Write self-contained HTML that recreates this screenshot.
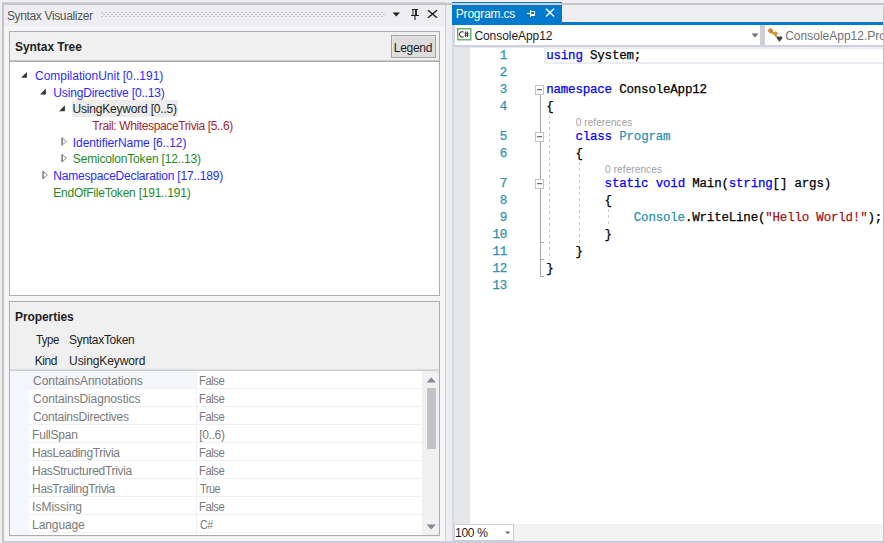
<!DOCTYPE html><html><head><meta charset="utf-8"><style>
*{margin:0;padding:0;box-sizing:border-box}
html,body{width:884px;height:543px;overflow:hidden;background:#eeeef2}
body{position:relative;font-family:"Liberation Sans",sans-serif}
div,svg{position:absolute}
svg{shape-rendering:crispEdges}
svg.aa{shape-rendering:auto}
.t{white-space:pre;line-height:1}
.m{font-family:"Liberation Mono",monospace;font-size:12.5px;letter-spacing:-0.2px;white-space:pre;line-height:12.5px;-webkit-text-stroke:0.25px currentColor}
.kw{color:#0000ff}.ty{color:#2b91af}.st{color:#a31515}
</style></head><body><div style="left:2px;top:2px;width:444px;height:1px;background:#d0d2de"></div>
<div style="left:2px;top:3px;width:882px;height:2px;background:#c4c4c4"></div>
<div style="left:2px;top:2px;width:2px;height:541px;background:#c4c4c4"></div>
<div style="left:883px;top:3px;width:1px;height:540px;background:#c4c4c4"></div>
<div style="left:4px;top:5px;width:441px;height:21px;background:#eeeef2"></div>
<div style="left:4px;top:26px;width:441px;height:515px;background:#f5f5f5"></div>
<div style="left:445px;top:5px;width:1px;height:536px;background:#cccedb"></div>
<div style="left:4px;top:541px;width:879px;height:2px;background:#cccedb"></div>
<svg style="left:101px;top:12px" width="284" height="5"><defs><pattern id="g" width="4" height="4" patternUnits="userSpaceOnUse"><rect x="0" y="0" width="2" height="1" fill="#c3c3ca"/><rect x="2" y="2" width="2" height="1" fill="#c3c3ca"/></pattern></defs><rect width="284" height="5" fill="url(#g)"/></svg>
<svg class="aa" style="left:392px;top:12px" width="9" height="6"><path d="M0.6 0.4H7.9L4.25 4.6Z" fill="#1e1e1e"/></svg>
<svg style="left:411px;top:9px" width="8" height="11"><rect x="1" y="0" width="6" height="1" fill="#2a2a2a"/><rect x="1" y="1" width="2" height="5" fill="#8a8a8a"/><rect x="4" y="1" width="2" height="5" fill="#2a2a2a"/><rect x="0" y="6" width="8" height="1" fill="#1e1e1e"/><rect x="3" y="7" width="2" height="4" fill="#7a7a7a"/></svg>
<svg class="aa" style="left:427px;top:9px" width="11" height="10"><path d="M1 1.2L10 8.8M10 1.2L1 8.8" stroke="#1e1e1e" stroke-width="1.5"/></svg>
<div style="left:9px;top:31px;width:431px;height:265px;border:1px solid #abadb3;background:#fff"></div>
<div style="left:10px;top:32px;width:429px;height:28px;background:#f0f0f0"></div>
<div style="left:10px;top:60px;width:429px;height:1px;background:#c6c8cc"></div>
<div style="left:10px;top:61px;width:429px;height:1px;background:#abadb3"></div>
<div style="left:391px;top:35px;width:45px;height:23px;border:1px solid #a3a3a3;background:#dddddd;box-shadow:inset 1px 1px 0 #e6e6e6"></div>
<div style="left:72px;top:100px;width:106px;height:17px;background:#ececec"></div>
<svg class="aa" style="left:21px;top:71px" width="9" height="9"><path d="M5.90 0.90V6.80H0.10Z" fill="#333"/></svg>
<svg class="aa" style="left:40px;top:88px" width="9" height="9"><path d="M5.90 0.61V6.51H0.10Z" fill="#333"/></svg>
<svg class="aa" style="left:59px;top:105px" width="9" height="9"><path d="M5.90 0.32V6.22H0.10Z" fill="#333"/></svg>
<svg class="aa" style="left:61px;top:137px" width="9" height="10"><path d="M1.30 1.10L5.40 4.50L1.30 7.90Z" fill="none" stroke="#8a8a8a" stroke-width="1"/><rect x="0.30" y="0.50" width="1.7" height="8" fill="#8a8a8a"/></svg>
<svg class="aa" style="left:61px;top:154px" width="9" height="10"><path d="M1.30 0.81L5.40 4.21L1.30 7.61Z" fill="none" stroke="#8a8a8a" stroke-width="1"/><rect x="0.30" y="0.21" width="1.7" height="8" fill="#8a8a8a"/></svg>
<svg class="aa" style="left:42px;top:170px" width="9" height="10"><path d="M1.30 1.52L5.40 4.92L1.30 8.32Z" fill="none" stroke="#8a8a8a" stroke-width="1"/><rect x="0.30" y="0.92" width="1.7" height="8" fill="#8a8a8a"/></svg>
<div style="left:9px;top:301px;width:431px;height:235px;border:1px solid #abadb3;background:#fff"></div>
<div style="left:10px;top:302px;width:429px;height:68px;background:#f0f0f0"></div>
<div style="left:10px;top:369px;width:429px;height:1px;background:#dcdde0"></div>
<div style="left:10px;top:370px;width:429px;height:1px;background:#cdced2"></div>
<div style="left:10px;top:371px;width:19px;height:164px;background:#f4f6fb"></div>
<div style="left:10px;top:371px;width:186px;height:18px;background:#f4f6fb"></div>
<div style="left:29px;top:388px;width:393px;height:1px;background:#f1f1f3"></div>
<div style="left:29px;top:406px;width:393px;height:1px;background:#f1f1f3"></div>
<div style="left:29px;top:424px;width:393px;height:1px;background:#f1f1f3"></div>
<div style="left:29px;top:442px;width:393px;height:1px;background:#f1f1f3"></div>
<div style="left:29px;top:460px;width:393px;height:1px;background:#f1f1f3"></div>
<div style="left:29px;top:478px;width:393px;height:1px;background:#f1f1f3"></div>
<div style="left:29px;top:496px;width:393px;height:1px;background:#f1f1f3"></div>
<div style="left:29px;top:514px;width:393px;height:1px;background:#f1f1f3"></div>
<div style="left:29px;top:532px;width:393px;height:1px;background:#f1f1f3"></div>
<div style="left:196px;top:371px;width:1px;height:164px;background:#f1f1f3"></div>
<div style="left:422px;top:371px;width:17px;height:164px;background:#f0f0f0"></div>
<div style="left:427px;top:388px;width:9px;height:61px;background:#c2c3c9"></div>
<svg class="aa" style="left:426px;top:377px" width="11" height="6"><path d="M0.5 5.5L5.25 0.5L10 5.5Z" fill="#868999"/></svg>
<svg class="aa" style="left:426px;top:524px" width="11" height="6"><path d="M0.5 0.5L5.25 5.5L10 0.5Z" fill="#868999"/></svg>
<div style="left:452px;top:2px;width:110px;height:1px;background:#007acc"></div>
<div style="left:452px;top:3px;width:110px;height:2px;background:#d6ccc6"></div>
<div style="left:452px;top:5px;width:110px;height:17px;background:#007acc"></div>
<div style="left:452px;top:22px;width:431px;height:3px;background:#007acc"></div>
<svg style="left:527px;top:10px" width="9" height="8"><rect x="0" y="3" width="3" height="1" fill="#fff"/><rect x="3" y="0" width="1" height="7" fill="#fff"/><rect x="4" y="1" width="4" height="1" fill="#fff"/><rect x="4" y="4" width="4" height="2" fill="#fff"/><rect x="7" y="2" width="1" height="2" fill="#fff"/></svg>
<svg class="aa" style="left:545px;top:8px" width="10" height="10"><path d="M1 0.8L9 8.6M9 0.8L1 8.6" stroke="#fff" stroke-width="1.4"/></svg>
<div style="left:452px;top:25px;width:2px;height:516px;background:#d6d8e3"></div>
<div style="left:454px;top:25px;width:1px;height:22px;background:#d6d8e3"></div>
<div style="left:455px;top:25px;width:305px;height:20px;background:#fff"></div>
<div style="left:760px;top:25px;width:5px;height:20px;background:#cccedb"></div>
<div style="left:765px;top:25px;width:118px;height:20px;background:#fff"></div>
<div style="left:455px;top:45px;width:428px;height:2px;background:#cfd1dd"></div>
<div style="left:470px;top:47px;width:413px;height:1px;background:#e6e7ee"></div>
<div style="left:454px;top:47px;width:16px;height:1px;background:#e0e1e6"></div>
<svg class="aa" style="left:457px;top:28px" width="15" height="13"><rect x="0.75" y="0.75" width="13" height="11" fill="#fff" stroke="#6cb56c" stroke-width="1.5"/><path d="M6.6 4.2A2.6 2.6 0 1 0 6.6 8.4" fill="none" stroke="#555" stroke-width="1.2"/><path d="M8.5 3.5V9M10.5 3.5V9M7.6 5.2H11.6M7.6 7.3H11.6" stroke="#444" stroke-width="1.1"/></svg>
<svg class="aa" style="left:751px;top:33px" width="8" height="5"><path d="M0.5 0.5H7.5L4 4.5Z" fill="#717171"/></svg>
<svg class="aa" style="left:764px;top:25px" width="22" height="20"><path d="M4.5 5.5L6.5 3.8L8.5 5.8L6.5 7.6Z" fill="#d08a24" stroke="#d08a24" stroke-width="1.6" stroke-linejoin="round"/><path d="M7.5 6.8L9.8 8.8L11.6 7.2L13 8.6L11.2 10.2L12.8 11.8" fill="none" stroke="#d08a24" stroke-width="1.8" stroke-linejoin="round"/><path d="M15.5 16.8L12.8 13.6A1.45 1.45 0 0 1 15.5 12.2A1.45 1.45 0 0 1 18.2 13.6Z" fill="#404040"/></svg>
<div style="left:454px;top:48px;width:16px;height:476px;background:#e6e7e8"></div>
<div style="left:470px;top:48px;width:413px;height:476px;background:#fff"></div>
<div style="left:455px;top:524px;width:428px;height:17px;background:#f3f3f3"></div>
<div style="left:454px;top:524px;width:60px;height:17px;border:1px solid #cccedb;background:#fff"></div>
<svg class="aa" style="left:505px;top:531px" width="6" height="4"><path d="M0 0.5H5.5L2.75 3.2Z" fill="#717171"/></svg>
<div style="left:544px;top:47px;width:339px;height:17px;border:2px solid #ebebf2;border-right:none"></div>
<div class="m" style="left:546.2px;top:50px;color:#000"><span class="kw">using</span> System;</div>
<div class="m" style="left:499.7px;top:50px;color:#2b91af">1</div>
<div class="m" style="left:499.7px;top:67px;color:#2b91af">2</div>
<div class="m" style="left:546.2px;top:84px;color:#000"><span class="kw">namespace</span> ConsoleApp12</div>
<div class="m" style="left:499.7px;top:84px;color:#2b91af">3</div>
<div class="m" style="left:546.2px;top:101px;color:#000">{</div>
<div class="m" style="left:499.7px;top:101px;color:#2b91af">4</div>
<div class="m" style="left:546.2px;top:131px;color:#000">    <span class="kw">class</span> <span class="ty">Program</span></div>
<div class="m" style="left:499.7px;top:131px;color:#2b91af">5</div>
<div class="m" style="left:546.2px;top:148px;color:#000">    {</div>
<div class="m" style="left:499.7px;top:148px;color:#2b91af">6</div>
<div class="m" style="left:546.2px;top:178px;color:#000">        <span class="kw">static</span> <span class="kw">void</span> Main(<span class="kw">string</span>[] args)</div>
<div class="m" style="left:499.7px;top:178px;color:#2b91af">7</div>
<div class="m" style="left:546.2px;top:195px;color:#000">        {</div>
<div class="m" style="left:499.7px;top:195px;color:#2b91af">8</div>
<div class="m" style="left:546.2px;top:212px;color:#000">            <span class="ty">Console</span>.WriteLine(<span class="st">"Hello World!"</span>);</div>
<div class="m" style="left:499.7px;top:212px;color:#2b91af">9</div>
<div class="m" style="left:546.2px;top:229px;color:#000">        }</div>
<div class="m" style="left:492.4px;top:229px;color:#2b91af">10</div>
<div class="m" style="left:546.2px;top:246px;color:#000">    }</div>
<div class="m" style="left:492.4px;top:246px;color:#2b91af">11</div>
<div class="m" style="left:546.2px;top:263px;color:#000">}</div>
<div class="m" style="left:492.4px;top:263px;color:#2b91af">12</div>
<div class="m" style="left:492.4px;top:280px;color:#2b91af">13</div>
<div style="left:540px;top:94px;width:1px;height:183px;background:#a5a5a5"></div>
<div style="left:540px;top:242px;width:4px;height:1px;background:#a5a5a5"></div>
<div style="left:540px;top:259px;width:4px;height:1px;background:#a5a5a5"></div>
<div style="left:540px;top:276px;width:4px;height:1px;background:#a5a5a5"></div>
<svg style="left:535px;top:85px" width="10" height="10"><rect x="0.5" y="0.5" width="8" height="9" fill="#fff" stroke="#c4c4c4"/><rect x="2" y="4" width="5" height="1" fill="#707070"/><rect x="2" y="5" width="5" height="1" fill="#d8d8d8"/></svg>
<svg style="left:535px;top:132px" width="10" height="10"><rect x="0.5" y="0.5" width="8" height="9" fill="#fff" stroke="#c4c4c4"/><rect x="2" y="4" width="5" height="1" fill="#707070"/><rect x="2" y="5" width="5" height="1" fill="#d8d8d8"/></svg>
<svg style="left:535px;top:179px" width="10" height="10"><rect x="0.5" y="0.5" width="8" height="9" fill="#fff" stroke="#c4c4c4"/><rect x="2" y="4" width="5" height="1" fill="#707070"/><rect x="2" y="5" width="5" height="1" fill="#d8d8d8"/></svg>
<svg style="left:549px;top:115px" width="1" height="145"><line x1="0.5" y1="0" x2="0.5" y2="145" stroke="#cdcdcd" stroke-dasharray="3 3"/></svg>
<svg style="left:579px;top:162px" width="1" height="81"><line x1="0.5" y1="0" x2="0.5" y2="81" stroke="#cdcdcd" stroke-dasharray="3 3"/></svg>
<svg style="left:608px;top:209px" width="1" height="17"><line x1="0.5" y1="0" x2="0.5" y2="17" stroke="#cdcdcd" stroke-dasharray="3 3"/></svg>
<div class="t" style="left:6.90px;top:10px;font-size:12px;font-weight:normal;color:#555;letter-spacing:-0.350px;">Syntax Visualizer</div>
<div class="t" style="left:15.00px;top:41px;font-size:12px;font-weight:bold;color:#1e1e1e;letter-spacing:-0.050px;">Syntax Tree</div>
<div class="t" style="left:393.80px;top:42px;font-size:12px;font-weight:normal;color:#1e1e1e;letter-spacing:-0.300px;">Legend</div>
<div class="t" style="left:35.00px;top:70px;font-size:12px;font-weight:normal;color:#2a2aff;letter-spacing:-0.017px;">CompilationUnit [0..191)</div>
<div class="t" style="left:53.30px;top:87px;font-size:12px;font-weight:normal;color:#2a2aff;letter-spacing:-0.152px;">UsingDirective [0..13)</div>
<div class="t" style="left:72.60px;top:103px;font-size:12px;font-weight:normal;color:#1e1e1e;letter-spacing:-0.200px;">UsingKeyword [0..5)</div>
<div class="t" style="left:92.30px;top:120px;font-size:12px;font-weight:normal;color:#a3282a;letter-spacing:-0.372px;">Trail: WhitespaceTrivia [5..6)</div>
<div class="t" style="left:72.80px;top:137px;font-size:12px;font-weight:normal;color:#2a2aff;letter-spacing:-0.086px;">IdentifierName [6..12)</div>
<div class="t" style="left:72.80px;top:153px;font-size:12px;font-weight:normal;color:#1f8a1f;letter-spacing:-0.173px;">SemicolonToken [12..13)</div>
<div class="t" style="left:53.30px;top:170px;font-size:12px;font-weight:normal;color:#2a2aff;letter-spacing:-0.190px;">NamespaceDeclaration [17..189)</div>
<div class="t" style="left:53.30px;top:187px;font-size:12px;font-weight:normal;color:#1f8a1f;letter-spacing:-0.225px;">EndOfFileToken [191..191)</div>
<div class="t" style="left:15.00px;top:311px;font-size:12px;font-weight:bold;color:#1e1e1e;letter-spacing:-0.078px;">Properties</div>
<div class="t" style="left:35.80px;top:334px;font-size:12px;font-weight:normal;color:#1e1e1e;letter-spacing:-0.500px;transform:scaleX(0.947);transform-origin:0.00px 0">Type</div>
<div class="t" style="left:69.10px;top:334px;font-size:12px;font-weight:normal;color:#1e1e1e;letter-spacing:-0.310px;">SyntaxToken</div>
<div class="t" style="left:34.80px;top:355px;font-size:12px;font-weight:normal;color:#1e1e1e;letter-spacing:-0.433px;">Kind</div>
<div class="t" style="left:69.10px;top:355px;font-size:12px;font-weight:normal;color:#1e1e1e;letter-spacing:-0.100px;">UsingKeyword</div>
<div class="t" style="left:33.10px;top:375px;font-size:12px;font-weight:normal;color:#7a7a7a;letter-spacing:-0.061px;">ContainsAnnotations</div>
<div class="t" style="left:199.20px;top:375px;font-size:12px;font-weight:normal;color:#7a7a7a;letter-spacing:-0.500px;transform:scaleX(0.938);transform-origin:1.00px 0">False</div>
<div class="t" style="left:33.10px;top:393px;font-size:12px;font-weight:normal;color:#7a7a7a;letter-spacing:-0.117px;">ContainsDiagnostics</div>
<div class="t" style="left:199.20px;top:393px;font-size:12px;font-weight:normal;color:#7a7a7a;letter-spacing:-0.500px;transform:scaleX(0.938);transform-origin:1.00px 0">False</div>
<div class="t" style="left:33.10px;top:411px;font-size:12px;font-weight:normal;color:#7a7a7a;letter-spacing:-0.241px;">ContainsDirectives</div>
<div class="t" style="left:199.20px;top:411px;font-size:12px;font-weight:normal;color:#7a7a7a;letter-spacing:-0.500px;transform:scaleX(0.938);transform-origin:1.00px 0">False</div>
<div class="t" style="left:32.10px;top:429px;font-size:12px;font-weight:normal;color:#7a7a7a;letter-spacing:-0.229px;">FullSpan</div>
<div class="t" style="left:199.20px;top:429px;font-size:12px;font-weight:normal;color:#7a7a7a;letter-spacing:-0.320px;">[0..6)</div>
<div class="t" style="left:32.10px;top:447px;font-size:12px;font-weight:normal;color:#7a7a7a;letter-spacing:-0.340px;">HasLeadingTrivia</div>
<div class="t" style="left:199.20px;top:447px;font-size:12px;font-weight:normal;color:#7a7a7a;letter-spacing:-0.500px;transform:scaleX(0.938);transform-origin:1.00px 0">False</div>
<div class="t" style="left:32.10px;top:465px;font-size:12px;font-weight:normal;color:#7a7a7a;letter-spacing:-0.300px;">HasStructuredTrivia</div>
<div class="t" style="left:199.20px;top:465px;font-size:12px;font-weight:normal;color:#7a7a7a;letter-spacing:-0.500px;transform:scaleX(0.938);transform-origin:1.00px 0">False</div>
<div class="t" style="left:32.10px;top:483px;font-size:12px;font-weight:normal;color:#7a7a7a;letter-spacing:-0.375px;">HasTrailingTrivia</div>
<div class="t" style="left:200.20px;top:483px;font-size:12px;font-weight:normal;color:#7a7a7a;letter-spacing:-0.500px;transform:scaleX(0.902);transform-origin:0.00px 0">True</div>
<div class="t" style="left:32.10px;top:501px;font-size:12px;font-weight:normal;color:#7a7a7a;letter-spacing:-0.013px;">IsMissing</div>
<div class="t" style="left:199.20px;top:501px;font-size:12px;font-weight:normal;color:#7a7a7a;letter-spacing:-0.500px;transform:scaleX(0.938);transform-origin:1.00px 0">False</div>
<div class="t" style="left:32.10px;top:519px;font-size:12px;font-weight:normal;color:#7a7a7a;letter-spacing:-0.100px;">Language</div>
<div class="t" style="left:200.20px;top:519px;font-size:12px;font-weight:normal;color:#7a7a7a;letter-spacing:-0.500px;transform:scaleX(0.890);transform-origin:0.00px 0">C#</div>
<div class="t" style="left:455.80px;top:8px;font-size:12px;font-weight:normal;color:#fff;letter-spacing:-0.200px;">Program.cs</div>
<div class="t" style="left:474.40px;top:30px;font-size:12px;font-weight:normal;color:#1e1e1e;letter-spacing:-0.055px;">ConsoleApp12</div>
<div class="t" style="left:785.20px;top:30px;font-size:12px;font-weight:normal;color:#717171;letter-spacing:0.000px;">ConsoleApp12.Pro</div>
<div class="t" style="left:455.10px;top:527px;font-size:12px;font-weight:normal;color:#1e1e1e;letter-spacing:-0.300px;">100 %</div>
<div class="t" style="left:575.70px;top:118px;font-size:10px;font-weight:normal;color:#a0a0a0;letter-spacing:0.100px;">0 references</div>
<div class="t" style="left:605.10px;top:165px;font-size:10px;font-weight:normal;color:#a0a0a0;letter-spacing:0.109px;">0 references</div>
<div style="left:883px;top:3px;width:1px;height:540px;background:#c4c4c4"></div></body></html>
